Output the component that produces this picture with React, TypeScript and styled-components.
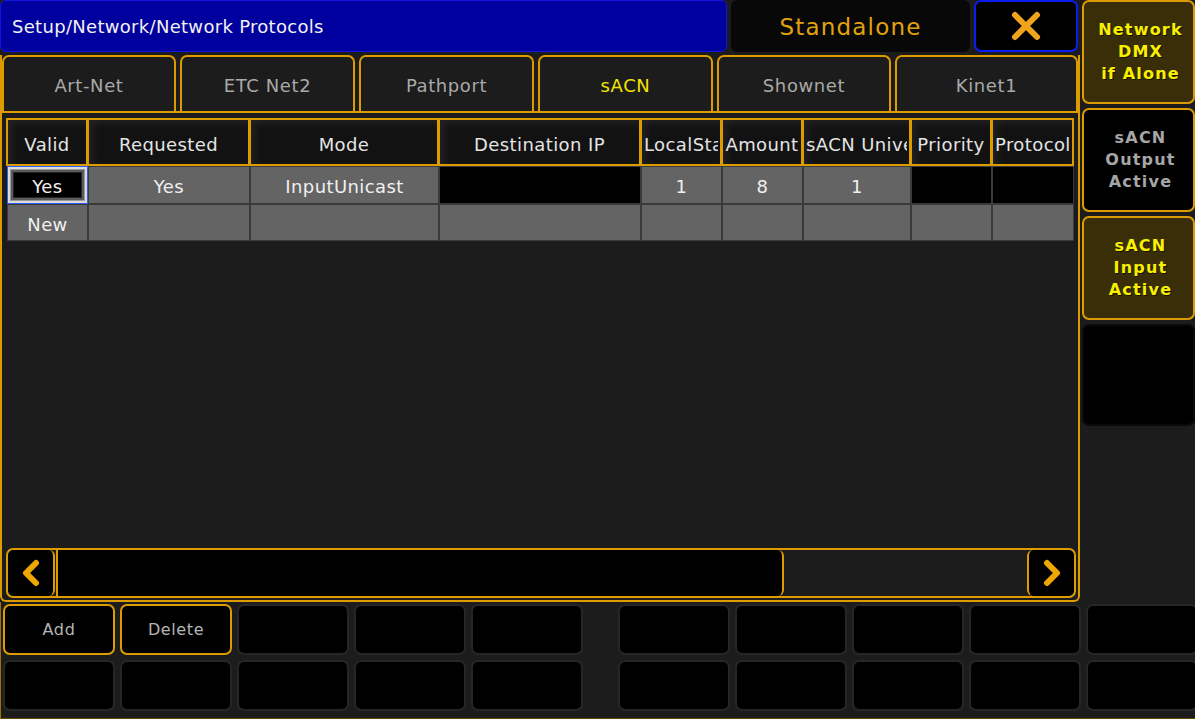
import styled, { createGlobalStyle } from 'styled-components';

const ORANGE = '#dc9c00';

const GlobalStyle = createGlobalStyle`
  html, body {
    margin: 0;
    padding: 0;
    background: #1c1c1c;
  }
  body {
    font-family: "DejaVu Sans", "Liberation Sans", sans-serif;
  }
`;

interface Column {
  title: string;
  width: number;
}

const columns: Column[] = [
  { title: 'Valid', width: 81 },
  { title: 'Requested', width: 162 },
  { title: 'Mode', width: 189 },
  { title: 'Destination IP', width: 202 },
  { title: 'LocalStart', width: 81 },
  { title: 'Amount', width: 81 },
  { title: 'sACN Universe', width: 108 },
  { title: 'Priority', width: 81 },
  { title: 'Protocol', width: 82 },
];

type CellKind = 'gray' | 'black' | 'selected';

interface CellData {
  text: string;
  kind: CellKind;
}

const rows: CellData[][] = [
  [
    { text: 'Yes', kind: 'selected' },
    { text: 'Yes', kind: 'gray' },
    { text: 'InputUnicast', kind: 'gray' },
    { text: '', kind: 'black' },
    { text: '1', kind: 'gray' },
    { text: '8', kind: 'gray' },
    { text: '1', kind: 'gray' },
    { text: '', kind: 'black' },
    { text: '', kind: 'black' },
  ],
  [
    { text: 'New', kind: 'gray' },
    { text: '', kind: 'gray' },
    { text: '', kind: 'gray' },
    { text: '', kind: 'gray' },
    { text: '', kind: 'gray' },
    { text: '', kind: 'gray' },
    { text: '', kind: 'gray' },
    { text: '', kind: 'gray' },
    { text: '', kind: 'gray' },
  ],
];

const tabs = ['Art-Net', 'ETC Net2', 'Pathport', 'sACN', 'Shownet', 'Kinet1'];

// bottom keys, null = gap between the two blocks
const keyRows: (string | null)[][] = [
  ['Add', 'Delete', '', '', '', null, '', '', '', '', ''],
  ['', '', '', '', '', null, '', '', '', '', ''],
];

const CloseIcon = () => (
  <svg width="32" height="30" viewBox="0 0 32 30">
    <g stroke="#f0a41c" strokeWidth="6" strokeLinecap="round">
      <line x1="5" y1="4" x2="27" y2="26" />
      <line x1="27" y1="4" x2="5" y2="26" />
    </g>
  </svg>
);

const Chevron = ({ dir }: { dir: 'left' | 'right' }) => (
  <svg width="22" height="28" viewBox="0 0 22 28">
    <polyline
      points={dir === 'left' ? '16,4 6,14 16,24' : '6,4 16,14 6,24'}
      fill="none"
      stroke="#eea600"
      strokeWidth="6"
      strokeLinecap="round"
      strokeLinejoin="round"
    />
  </svg>
);

const App = () => {
  return (
    <>
      <GlobalStyle />
      <Screen>
        <TopSection>
          <MainColumn>
            <TitleRow>
              <TitleBar>Setup/Network/Network Protocols</TitleBar>
              <StatusBox>Standalone</StatusBox>
              <CloseButton>
                <CloseIcon />
              </CloseButton>
            </TitleRow>
            <Panel>
              <TabRow>
                {tabs.map((tab) => (
                  <Tab key={tab} $active={tab === 'sACN'}>
                    {tab}
                  </Tab>
                ))}
              </TabRow>
              <PanelBody>
                <Table $cols={columns.map((c) => `${c.width}px`).join(' ')}>
                  {columns.map((col) => (
                    <HeaderCell key={col.title}>
                      <HeaderText>{col.title}</HeaderText>
                    </HeaderCell>
                  ))}
                  {rows.map((row, r) =>
                    row.map((cell, c) => (
                      <DataCell key={`${r}-${c}`} $kind={cell.kind}>
                        {cell.text}
                      </DataCell>
                    ))
                  )}
                </Table>
                <ScrollBar>
                  <ArrowButton $side="left">
                    <Chevron dir="left" />
                  </ArrowButton>
                  <ScrollThumb />
                  <ScrollTrack />
                  <ArrowButton $side="right">
                    <Chevron dir="right" />
                  </ArrowButton>
                </ScrollBar>
              </PanelBody>
            </Panel>
          </MainColumn>
          <SideColumn>
            <SideButton $variant="on">
              Network
              <br />
              DMX
              <br />
              if Alone
            </SideButton>
            <SideButton $variant="off">
              sACN
              <br />
              Output
              <br />
              Active
            </SideButton>
            <SideButton $variant="on">
              sACN
              <br />
              Input
              <br />
              Active
            </SideButton>
            <SideButton $variant="empty" />
          </SideColumn>
        </TopSection>
        <Footer>
          {keyRows.map((row, r) =>
            row.map((label, i) =>
              label === null ? (
                <KeyGap key={`${r}-${i}`} />
              ) : (
                <KeyButton key={`${r}-${i}`} $highlight={label !== ''}>
                  {label}
                </KeyButton>
              )
            )
          )}
        </Footer>
      </Screen>
    </>
  );
};

export default App;

const Screen = styled.div`
  width: 1195px;
  height: 719px;
  background: #1c1c1c;
  overflow: hidden;
  display: flex;
  flex-direction: column;
`;

const TopSection = styled.div`
  display: flex;
  gap: 2px;
  height: 602px;
`;

const MainColumn = styled.div`
  width: 1080px;
  display: flex;
  flex-direction: column;
  gap: 3px;
`;

const TitleRow = styled.div`
  display: flex;
  gap: 4px;
  height: 52px;
  width: 1078px;
`;

const TitleBar = styled.div`
  width: 727px;
  box-sizing: border-box;
  background: #00009e;
  border: 1px solid #1414e0;
  border-radius: 6px;
  color: #f2f2f2;
  font-size: 18px;
  letter-spacing: 0.3px;
  display: flex;
  align-items: center;
  padding-left: 11px;
`;

const StatusBox = styled.div`
  width: 239px;
  background: #080808;
  border-radius: 6px;
  color: #e2a20e;
  font-size: 23px;
  letter-spacing: 1.2px;
  display: flex;
  align-items: center;
  justify-content: center;
  padding-top: 2px;
  box-sizing: border-box;
`;

const CloseButton = styled.div`
  width: 104px;
  box-sizing: border-box;
  background: #000;
  border: 2px solid #0a1cf0;
  border-radius: 7px;
  display: flex;
  align-items: center;
  justify-content: center;
`;

const Panel = styled.div`
  flex: 1;
  box-sizing: border-box;
  border: 2px solid ${ORANGE};
  border-top: none;
  border-radius: 0 0 6px 6px;
  display: flex;
  flex-direction: column;
`;

const TabRow = styled.div`
  display: grid;
  grid-template-columns: 174px 175px 175px 175px 174px 1fr;
  column-gap: 4px;
  height: 58px;
  box-sizing: border-box;
  border-bottom: 2px solid ${ORANGE};
`;

const Tab = styled.div<{ $active?: boolean }>`
  box-sizing: border-box;
  border: 2px solid ${ORANGE};
  border-bottom: none;
  border-radius: 7px 7px 0 0;
  background: #1c1c1c;
  color: ${(p) => (p.$active ? '#f4e400' : '#a9a9a9')};
  font-size: 18px;
  letter-spacing: 0.6px;
  display: flex;
  align-items: center;
  justify-content: center;
  padding-top: 2px;
`;

const PanelBody = styled.div`
  flex: 1;
  display: flex;
  flex-direction: column;
  justify-content: space-between;
  padding: 5px 2px 2px 4px;
`;

const Table = styled.div<{ $cols: string }>`
  display: grid;
  grid-template-columns: ${(p) => p.$cols};
  grid-template-rows: 48px 38px 37px;
  margin-left: 1px;
`;

const HeaderCell = styled.div`
  box-sizing: border-box;
  border: 2px solid ${ORANGE};
  margin-left: -1px;
  background: #121212;
  box-shadow: inset 4px 3px 8px rgba(255, 255, 255, 0.07);
  display: flex;
  align-items: center;
  justify-content: center;
  overflow: hidden;
  padding: 4px 2px 0;
`;

const HeaderText = styled.span`
  color: #e4e4e4;
  font-size: 18px;
  letter-spacing: 0.4px;
  white-space: nowrap;
  overflow: hidden;
  text-overflow: clip;
  max-width: 100%;
`;

const DataCell = styled.div<{ $kind: CellKind }>`
  box-sizing: border-box;
  border: ${(p) => (p.$kind === 'selected' ? '1px solid #2a5cff' : '1px solid #3a3a3a')};
  background: ${(p) => (p.$kind === 'gray' ? '#646464' : '#000')};
  box-shadow: ${(p) =>
    p.$kind === 'selected'
      ? 'inset 0 0 0 2px #dcdcdc, inset 0 0 0 3px #9a9a9a, inset 0 0 0 5px #5a5a5a, inset 0 0 0 6px #262626'
      : 'none'};
  color: #f0f0f0;
  font-size: 18px;
  letter-spacing: 0.4px;
  display: flex;
  align-items: center;
  justify-content: center;
  padding-top: 3px;
  white-space: nowrap;
  overflow: hidden;
`;

const ScrollBar = styled.div`
  display: flex;
  height: 50px;
  width: 1070px;
  box-sizing: border-box;
  border: 2px solid ${ORANGE};
  border-radius: 7px;
  overflow: hidden;
  background: #1c1c1c;
`;

const ArrowButton = styled.div<{ $side: 'left' | 'right' }>`
  width: 47px;
  box-sizing: border-box;
  background: #000;
  border-${(p) => (p.$side === 'left' ? 'right' : 'left')}: 2px solid ${ORANGE};
  border-radius: 6px;
  display: flex;
  align-items: center;
  justify-content: center;
`;

const ScrollThumb = styled.div`
  width: 728px;
  box-sizing: border-box;
  margin-left: 1px;
  background: #000;
  border-left: 2px solid ${ORANGE};
  border-right: 2px solid ${ORANGE};
  border-radius: 0 6px 6px 0;
`;

const ScrollTrack = styled.div`
  flex: 1;
`;

const SideColumn = styled.div`
  width: 113px;
  display: flex;
  flex-direction: column;
  gap: 4px;
`;

type SideVariant = 'on' | 'off' | 'empty';

const SideButton = styled.div<{ $variant: SideVariant }>`
  height: ${(p) => (p.$variant === 'empty' ? '102px' : '104px')};
  box-sizing: border-box;
  border-radius: 7px;
  border: 2px solid ${(p) => (p.$variant === 'empty' ? '#0a0a0a' : ORANGE)};
  background: ${(p) => (p.$variant === 'on' ? '#3a2e08' : '#000')};
  color: ${(p) => (p.$variant === 'on' ? '#f8f000' : '#a6a6a6')};
  text-shadow: ${(p) => (p.$variant === 'on' ? '1px 1px 0 #1a1400' : 'none')};
  font-size: 16px;
  font-weight: bold;
  letter-spacing: 1.2px;
  line-height: 22px;
  text-align: center;
  display: flex;
  align-items: center;
  justify-content: center;
  padding-left: 4px;
`;

const Footer = styled.div`
  flex: 1;
  display: grid;
  grid-template-columns: repeat(5, 112px) 25px repeat(5, 112px);
  grid-template-rows: 51px 51px;
  gap: 5px;
  padding: 2px 0 0 2px;
  box-sizing: border-box;
  border-left: 1px solid #a07000;
  border-bottom: 1px solid #6a4c00;
`;

const KeyGap = styled.div``;

const KeyButton = styled.div<{ $highlight?: boolean }>`
  box-sizing: border-box;
  background: #000;
  border: 2px solid ${(p) => (p.$highlight ? ORANGE : '#262626')};
  border-radius: 7px;
  color: #b4b4b4;
  font-size: 16px;
  letter-spacing: 0.6px;
  display: flex;
  align-items: center;
  justify-content: center;
`;
